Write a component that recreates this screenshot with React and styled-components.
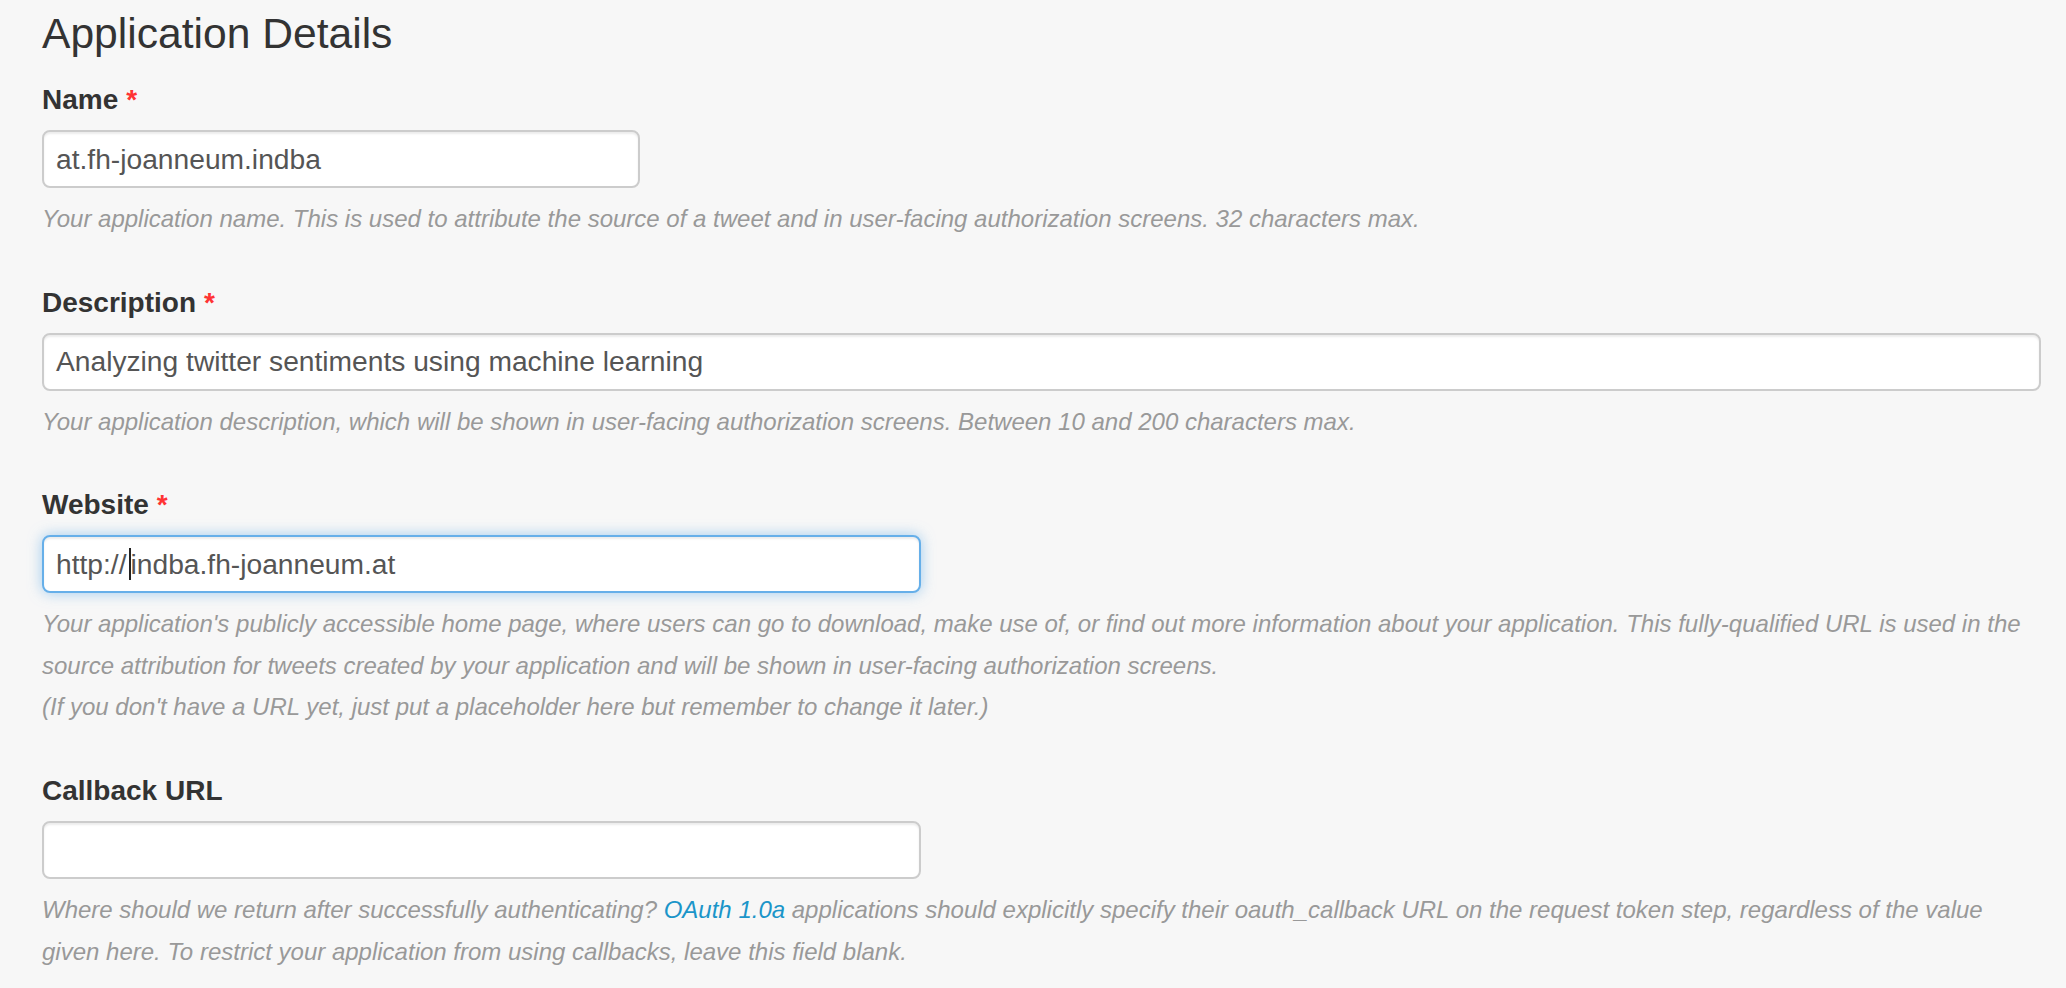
import React from "react";
import styled, { createGlobalStyle, css } from "styled-components";

const GlobalStyle = createGlobalStyle`
  html, body {
    margin: 0;
    padding: 0;
    background: #f7f7f7;
  }
  body {
    font-family: "Liberation Sans", Arial, Helvetica, sans-serif;
    color: #333;
  }
`;

const Page = styled.div`
  padding: 10px 25px 20px 42px;
  background: #f7f7f7;
  min-height: 958px;
`;

const Title = styled.h3`
  margin: 0 0 24px 0;
  font-size: 42.6px;
  line-height: 46px;
  font-weight: 400;
  color: #333;
`;

const Group = styled.div`
  margin-bottom: 43px;
`;

const Label = styled.label`
  display: block;
  font-size: 28px;
  line-height: 40px;
  font-weight: 700;
  color: #333;
  margin-bottom: 10px;
`;

const Required = styled.span`
  color: #ff3333;
  font-weight: 700;
  margin-left: 8px;
`;

const TextBox = styled.div`
  box-sizing: border-box;
  width: ${(p) => p.$width};
  height: 58px;
  padding: 0 12px;
  display: flex;
  align-items: center;
  background: #fff;
  border: 2px solid #cccccc;
  border-radius: 8px;
  box-shadow: inset 0 2px 2px rgba(0, 0, 0, 0.075);
  font-size: 28.2px;
  color: #555;
  white-space: pre;
  ${(p) =>
    p.$focused &&
    css`
      border-color: #66afe9;
      box-shadow: inset 0 2px 2px rgba(0, 0, 0, 0.075),
        0 0 14px rgba(102, 175, 233, 0.6);
    `}
`;

const Caret = styled.span`
  display: inline-block;
  width: 2px;
  height: 32px;
  background: #222;
  margin: 0 0 0 2px;
  vertical-align: middle;
`;

const Help = styled.p`
  margin: 10px 0 0 0;
  font-size: 24px;
  line-height: 41.6px;
  font-style: italic;
  color: #999;
`;

const Link = styled.a`
  color: #1b95c9;
  text-decoration: none;
`;

export default function App() {
  return (
    <>
      <GlobalStyle />
      <Page>
        <Title>Application Details</Title>

        <Group>
          <Label>
            Name<Required>*</Required>
          </Label>
          <TextBox $width="598px">at.fh-joanneum.indba</TextBox>
          <Help>
            Your application name. This is used to attribute the source of a
            tweet and in user-facing authorization screens. 32 characters max.
          </Help>
        </Group>

        <Group>
          <Label>
            Description<Required>*</Required>
          </Label>
          <TextBox $width="100%">
            Analyzing twitter sentiments using machine learning
          </TextBox>
          <Help>
            Your application description, which will be shown in user-facing
            authorization screens. Between 10 and 200 characters max.
          </Help>
        </Group>

        <Group>
          <Label>
            Website<Required>*</Required>
          </Label>
          <TextBox $width="879px" $focused>
            http://
            <Caret />
            indba.fh-joanneum.at
          </TextBox>
          <Help>
            Your application's publicly accessible home page, where users can
            go to download, make use of, or find out more information about
            your application. This fully-qualified URL is used in the source
            attribution for tweets created by your application and will be
            shown in user-facing authorization screens.
            <br />
            (If you don't have a URL yet, just put a placeholder here but
            remember to change it later.)
          </Help>
        </Group>

        <Group>
          <Label>Callback URL</Label>
          <TextBox $width="879px" />
          <Help>
            Where should we return after successfully authenticating?{" "}
            <Link href="#">OAuth 1.0a</Link> applications should explicitly
            specify their oauth_callback URL on the request token step,
            regardless of the value given here. To restrict your application
            from using callbacks, leave this field blank.
          </Help>
        </Group>
      </Page>
    </>
  );
}
